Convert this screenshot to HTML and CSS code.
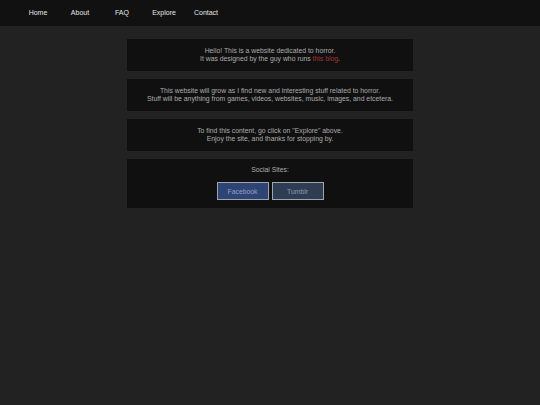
FILE: index.html
```html
<!DOCTYPE html>
<html>
<head>
<meta charset="utf-8">
<link rel="stylesheet" href="styles.css">
</head>
<body>
<nav class="nav">
  <a class="nav-item" href="#">Home</a>
  <a class="nav-item" href="#">About</a>
  <a class="nav-item" href="#">FAQ</a>
  <a class="nav-item" href="#">Explore</a>
  <a class="nav-item" href="#">Contact</a>
</nav>
<main class="main">
  <section class="box">
    <p>Hello! This is a website dedicated to horror.</p>
    <p>It was designed by the guy who runs <a class="red" href="#">this blog</a>.</p>
  </section>
  <section class="box">
    <p>This website will grow as I find new and interesting stuff related to horror.</p>
    <p>Stuff will be anything from games, videos, websites, music, images, and etcetera.</p>
  </section>
  <section class="box">
    <p>To find this content, go click on "Explore" above.</p>
    <p>Enjoy the site, and thanks for stopping by.</p>
  </section>
  <section class="box social">
    <p>Social Sites:</p>
    <div class="buttons">
      <a class="btn fb" href="#">Facebook</a>
      <a class="btn tb" href="#">Tumblr</a>
    </div>
  </section>
</main>
</body>
</html>
```
FILE: styles.css
```css
html, body {
  margin: 0;
  padding: 0;
  background: #222222;
  font-family: "Liberation Sans", Arial, sans-serif;
  font-size: 6.85px;
  color: #acacac;
}
.nav {
  display: flex;
  height: 26px;
  align-items: center;
  padding-left: 17px;
  background: #111111;
  padding-bottom: 2px;
  box-sizing: border-box;
}
.nav-item {
  width: 42px;
  text-align: center;
  color: #e4e4e4;
  text-decoration: none;
  font-size: 7px;
}
.main {
  width: 286px;
  margin: 13px auto 0;
  display: flex;
  flex-direction: column;
  gap: 8px;
}
.box {
  background: #101010;
  padding: 8px 0;
  text-align: center;
}
.box p {
  margin: 0;
  line-height: 8px;
}
.red {
  color: #a83232;
  text-decoration: none;
}
.social {
  padding-top: 7px;
}
.social .buttons {
  display: flex;
  justify-content: center;
  gap: 3px;
  margin-top: 8px;
}
.btn {
  width: 52px;
  height: 18px;
  box-sizing: border-box;
  border: 1px solid #a0a4ac;
  display: flex;
  align-items: center;
  justify-content: center;
  text-decoration: none;
  color: #94a2c2;
}
.fb {
  background: #2e4475;
}
.tb {
  background: #2e3d52;
  color: #909cb0;
}
```
